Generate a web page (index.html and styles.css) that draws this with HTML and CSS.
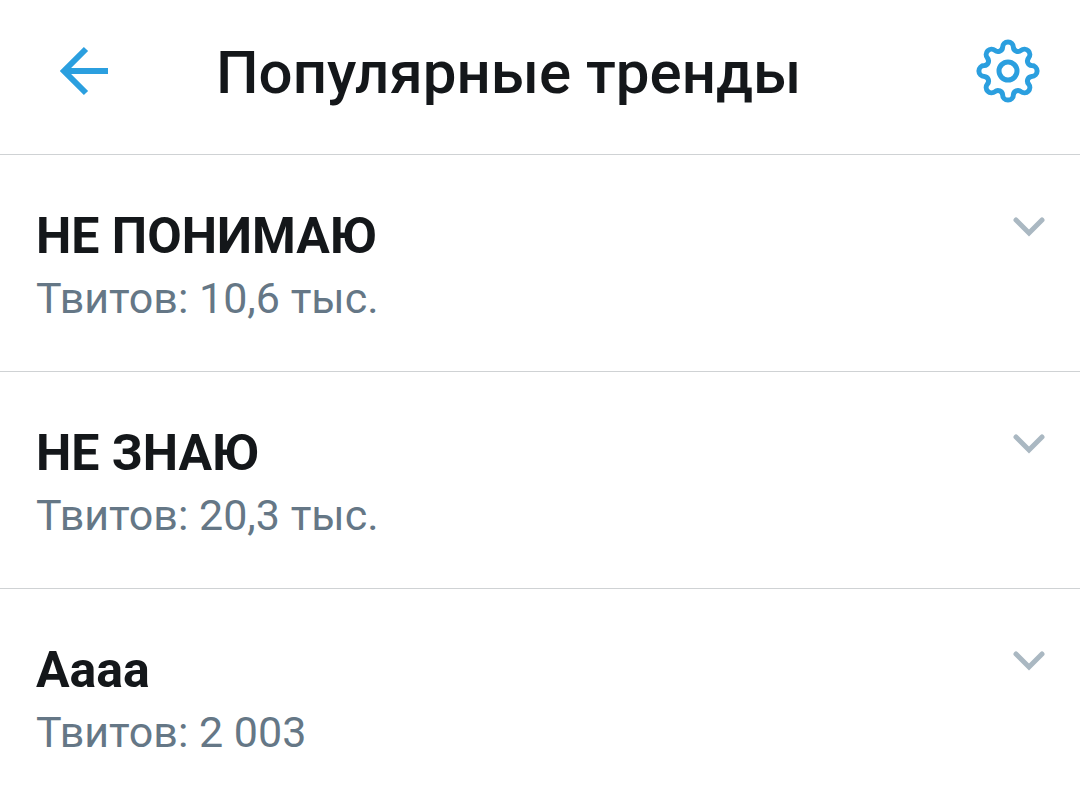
FILE: index.html
```html
<!DOCTYPE html>
<html lang="ru">
  <head>
    <meta charset="UTF-8" />
    <meta name="viewport" content="width=device-width, initial-scale=1.0" />
    <title>Популярные тренды</title>
    <link rel="stylesheet" href="styles.css">
  </head>
  <body>
    <header class="topbar">
      <button class="icon-button" type="button" aria-label="Назад">
        <svg class="icon-back" viewBox="0 0 50 50"><path d="M48 25H5M26 3L4 25l22 22" /></svg>
      </button>
      <h1>Популярные тренды</h1>
      <button class="icon-button" type="button" aria-label="Настройки">
        <svg class="icon-gear" viewBox="-32 -32 64 64">
          <path d="M-5.4-23.7A5.4 5.4 0 0 1 5.4-23.7A4.6 4.6 0 0 0 13-20.6A5.4 5.4 0 0 1 20.6-13A4.6 4.6 0 0 0 23.7-5.4A5.4 5.4 0 0 1 23.7 5.4A4.6 4.6 0 0 0 20.6 13A5.4 5.4 0 0 1 13 20.6A4.6 4.6 0 0 0 5.4 23.7A5.4 5.4 0 0 1-5.4 23.7A4.6 4.6 0 0 0-13 20.6A5.4 5.4 0 0 1-20.6 13A4.6 4.6 0 0 0-23.7 5.4A5.4 5.4 0 0 1-23.7-5.4A4.6 4.6 0 0 0-20.6-13A5.4 5.4 0 0 1-13-20.6A4.6 4.6 0 0 0-5.4-23.7z" />
          <circle r="9" />
        </svg>
      </button>
    </header>

    <main>
      <ul class="trends">
        <li class="trend">
          <div class="trend-text">
            <h2>НЕ ПОНИМАЮ</h2>
            <p>Твитов: 10,6 тыс.</p>
          </div>
          <button class="more" type="button" aria-label="Ещё">
            <svg viewBox="0 0 32 20"><path d="M3 3l13 13L29 3" /></svg>
          </button>
        </li>
        <li class="trend">
          <div class="trend-text">
            <h2>НЕ ЗНАЮ</h2>
            <p>Твитов: 20,3 тыс.</p>
          </div>
          <button class="more" type="button" aria-label="Ещё">
            <svg viewBox="0 0 32 20"><path d="M3 3l13 13L29 3" /></svg>
          </button>
        </li>
        <li class="trend">
          <div class="trend-text">
            <h2>Аааа</h2>
            <p>Твитов: 2 003</p>
          </div>
          <button class="more" type="button" aria-label="Ещё">
            <svg viewBox="0 0 32 20"><path d="M3 3l13 13L29 3" /></svg>
          </button>
        </li>
      </ul>
    </main>
  </body>
</html>
```
FILE: styles.css
```css
* {
  box-sizing: border-box;
}

body {
  margin: 0;
  background: #ffffff;
  color: #14171a;
  font-family: Roboto, "Noto Sans", sans-serif;
}

h1,
h2,
p,
ul {
  margin: 0;
  padding: 0;
}

button {
  border: 0;
  padding: 0;
  background: none;
  cursor: pointer;
}

svg {
  display: block;
  fill: none;
  stroke: currentColor;
}

.topbar {
  display: flex;
  align-items: center;
  padding: 0 40px 12px 60px;
  height: 155px;
  border-bottom: 1px solid #cfd2d4;
}

.topbar h1 {
  flex: 1;
  margin-left: 106px;
  padding-top: 4px;
  font-size: 60px;
  font-weight: 500;
  line-height: 72px;
}

.icon-button {
  color: #2b9fdf;
}

.icon-back {
  width: 50px;
  height: 50px;
  stroke-width: 6;
}

.icon-gear {
  width: 64px;
  height: 64px;
  stroke-width: 5;
}

.trends {
  list-style: none;
}

.trend {
  display: flex;
  justify-content: space-between;
  align-items: flex-start;
  padding: 48px 35px 44px 36px;
  border-bottom: 1px solid #cfd2d4;
}

.trend:last-child {
  border-bottom: 0;
}

.trend h2 {
  font-size: 50px;
  font-weight: 700;
  line-height: 66px;
}

.trend p {
  color: #657786;
  font-size: 43px;
  line-height: 58px;
}

.more {
  margin-top: 14px;
  color: #aab8c2;
}

.more svg {
  width: 32px;
  height: 20px;
  stroke-width: 5;
  stroke-linecap: round;
}
```
